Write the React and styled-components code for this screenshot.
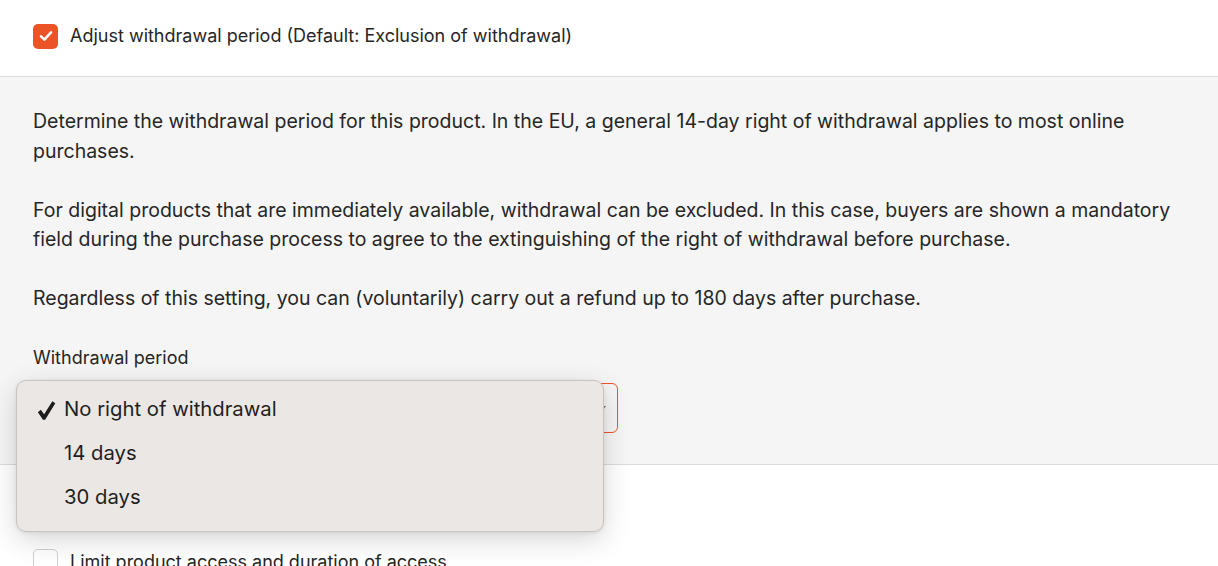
import React from 'react';
import styled, { createGlobalStyle } from 'styled-components';

const GlobalStyle = createGlobalStyle`
  html, body {
    margin: 0;
    padding: 0;
    background: #ffffff;
    font-family: Inter, "Noto Sans", sans-serif;
    color: #262626;
    -webkit-font-smoothing: antialiased;
  }
`;

const Page = styled.div`
  width: 1218px;
  height: 566px;
  overflow: hidden;
  background: #ffffff;
`;

const TopRow = styled.div`
  height: 77px;
  padding: 0 33px 4px;
  display: flex;
  align-items: center;
  gap: 12px;
  border-bottom: 1px solid #dcdcdc;
  box-sizing: border-box;
`;

const Box = styled.span`
  width: 25px;
  height: 25px;
  border-radius: 5px;
  box-sizing: border-box;
  display: flex;
  align-items: center;
  justify-content: center;
  flex-shrink: 0;
  background: ${p => (p.checked ? '#ec5428' : '#ffffff')};
  border: ${p => (p.checked ? 'none' : '1.5px solid #cfcfcf')};
`;

const RowLabel = styled.span`
  font-size: 18px;
  line-height: 26px;
  color: #262626;
`;

const Panel = styled.div`
  background: #f5f5f5;
  border-bottom: 1px solid #dcdcdc;
  padding: 30px 33px 31px;
`;

const Para = styled.p`
  margin: 0 0 29.5px;
  font-size: 19.5px;
  line-height: 29.5px;
  color: #262626;
`;

const FieldLabel = styled.div`
  font-size: 18px;
  line-height: 29.5px;
  color: #262626;
  margin-bottom: 10px;
`;

const SelectWrap = styled.div`
  position: relative;
  width: 585px;
`;

const SelectBox = styled.div`
  height: 50px;
  box-sizing: border-box;
  border: 1px solid #ec5428;
  border-radius: 6px;
  background: #f5f5f5;
  display: flex;
  align-items: center;
  justify-content: flex-end;
  padding-right: 11px;
`;

const Caret = styled.span`
  width: 0;
  height: 0;
  border-left: 3px solid transparent;
  border-right: 3px solid transparent;
  border-top: 4px solid #777;
`;

const Menu = styled.ul`
  position: absolute;
  left: -17px;
  top: -3px;
  width: 588px;
  height: 152px;
  box-sizing: border-box;
  margin: 0;
  padding: 6px 0;
  list-style: none;
  background: #eae7e4;
  border: 1px solid #c6c4c2;
  border-radius: 10px;
  box-shadow: 0 8px 28px rgba(0, 0, 0, 0.16), 0 1px 4px rgba(0, 0, 0, 0.08);
`;

const Item = styled.li`
  height: 44px;
  display: flex;
  align-items: center;
  padding-left: 20px;
  font-size: 20.3px;
  color: #1f1f1f;
`;

const Tick = styled.span`
  width: 27px;
  display: flex;
  align-items: center;
  padding-top: 4px;
`;

const Lower = styled.div`
  padding: 84px 33px 0;
  display: flex;
  align-items: flex-start;
  gap: 12px;
`;

const CheckIcon = () => (
  <svg width="16" height="16" viewBox="0 0 14 14" fill="none">
    <path d="M2.6 7.3 L5.6 10.2 L11.4 3.9" stroke="#fff" strokeWidth="2.2" strokeLinecap="round" strokeLinejoin="round" />
  </svg>
);

const MenuTick = () => (
  <svg width="19" height="21" viewBox="0 0 18 20">
    <path d="M0.8 11.6 L3.6 9.3 L6.7 13.6 L14.6 1.2 L17.4 3 L7.7 18.8 L5.6 18.8 Z" fill="#1c1c1c" />
  </svg>
);

const options = ['No right of withdrawal', '14 days', '30 days'];

export default function App() {
  return (
    <Page>
      <GlobalStyle />
      <TopRow>
        <Box checked><CheckIcon /></Box>
        <RowLabel>Adjust withdrawal period (Default: Exclusion of withdrawal)</RowLabel>
      </TopRow>
      <Panel>
        <Para>
          Determine the withdrawal period for this product. In the EU, a general 14-day right of withdrawal applies to most online purchases.
        </Para>
        <Para>
          For digital products that are immediately available, withdrawal can be excluded. In this case, buyers are shown a mandatory field during the purchase process to agree to the extinguishing of the right of withdrawal before purchase.
        </Para>
        <Para>
          Regardless of this setting, you can (voluntarily) carry out a refund up to 180 days after purchase.
        </Para>
        <FieldLabel>Withdrawal period</FieldLabel>
        <SelectWrap>
          <SelectBox><Caret /></SelectBox>
          <Menu>
            {options.map((o, i) => (
              <Item key={o}>
                <Tick>{i === 0 && <MenuTick />}</Tick>
                {o}
              </Item>
            ))}
          </Menu>
        </SelectWrap>
      </Panel>
      <Lower>
        <Box />
        <RowLabel>Limit product access and duration of access</RowLabel>
      </Lower>
    </Page>
  );
}
